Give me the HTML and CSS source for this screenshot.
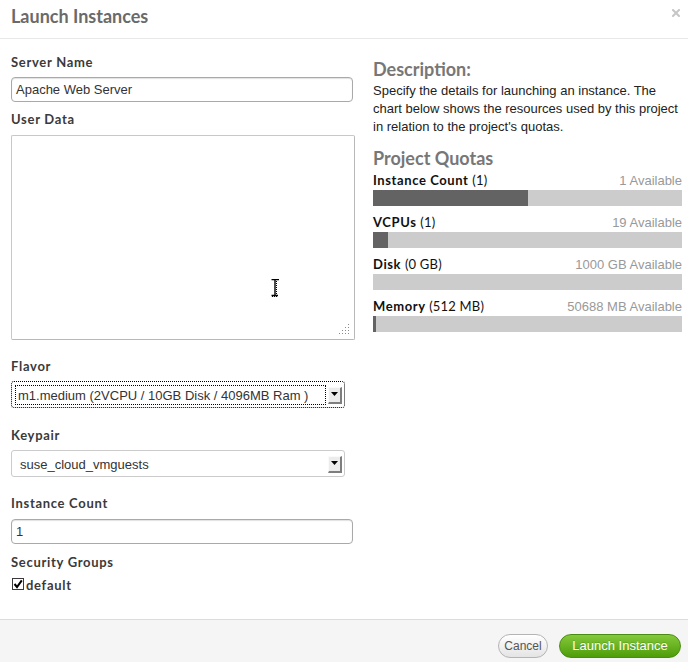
FILE: index.html
```html
<!DOCTYPE html>
<html>
<head>
<meta charset="utf-8">
<title>Launch Instances</title>
<link rel="stylesheet" href="styles.css">
</head>
<body>
<div class="modal">
  <div class="modal-header">
    <h3 class="title">Launch Instances</h3>
    <span class="close" aria-label="close">
      <svg width="8" height="8" viewBox="0 0 8 8"><path d="M1 1 L7 7 M7 1 L1 7" stroke="#c6c6c6" stroke-width="2" stroke-linecap="square"/></svg>
    </span>
  </div>

  <div class="modal-body">
    <div class="col-left">
      <label class="lbl lbl-server">Server Name</label>
      <div class="input">Apache Web Server</div>

      <label class="lbl lbl-userdata">User Data</label>
      <div class="textarea">
        <svg class="ibeam" width="9" height="18" viewBox="0 0 9 18">
          <path d="M0.5 0.5 H8 M4 0.5 V16.5 M0.5 16.5 H7" stroke="#000" stroke-width="1.4" fill="none"/>
          <path d="M5.5 2 V16" stroke="#000" stroke-width="1" stroke-dasharray="1 1" fill="none"/>
          <path d="M1 17.5 H7" stroke="#000" stroke-width="1" stroke-dasharray="1 1" fill="none"/>
        </svg>
        <svg class="grip" width="11" height="11" viewBox="0 0 11 11">
          <g fill="#8a8a8a">
            <rect x="9" y="0" width="1" height="1"/>
            <rect x="6" y="3" width="1" height="1"/><rect x="9" y="3" width="1" height="1"/>
            <rect x="3" y="6" width="1" height="1"/><rect x="6" y="6" width="1" height="1"/><rect x="9" y="6" width="1" height="1"/>
            <rect x="0" y="9" width="1" height="1"/><rect x="3" y="9" width="1" height="1"/><rect x="6" y="9" width="1" height="1"/><rect x="9" y="9" width="1" height="1"/>
          </g>
        </svg>
      </div>

      <label class="lbl lbl-flavor">Flavor</label>
      <div class="select select-focus">
        <span class="select-text focus-ring">m1.medium (2VCPU / 10GB Disk / 4096MB Ram )</span>
        <span class="select-arrow"><svg width="7" height="4" viewBox="0 0 7 4"><path d="M0 0 H7 L3.5 4 Z" fill="#000"/></svg></span>
      </div>

      <label class="lbl lbl-keypair">Keypair</label>
      <div class="select select-plain">
        <span class="select-text">suse_cloud_vmguests</span>
        <span class="select-arrow"><svg width="7" height="4" viewBox="0 0 7 4"><path d="M0 0 H7 L3.5 4 Z" fill="#000"/></svg></span>
      </div>

      <label class="lbl lbl-count">Instance Count</label>
      <div class="input">1</div>

      <label class="lbl lbl-security">Security Groups</label>
      <div class="check-row">
        <svg class="checkbox" width="12" height="12" viewBox="0 0 12 12">
          <rect x="0.5" y="0.5" width="11" height="11" fill="#fff" stroke="#3a3a3a"/>
          <path d="M2.5 6 L5 9 L9.8 2.3" stroke="#000" stroke-width="2" fill="none"/>
        </svg>
        <span class="check-label">default</span>
      </div>
    </div>

    <div class="col-right">
      <h4 class="sub">Description:</h4>
      <p class="desc">Specify the details for launching an instance. The chart below shows the resources used by this project in relation to the project's quotas.</p>

      <h4 class="sub sub-quotas">Project Quotas</h4>

      <div class="quota">
        <div class="quota-head"><span class="quota-name">Instance Count <span class="quota-val">(1)</span></span><span class="quota-avail">1 Available</span></div>
        <div class="bar"><div class="fill" style="width:50%"></div></div>
      </div>
      <div class="quota">
        <div class="quota-head"><span class="quota-name">VCPUs <span class="quota-val">(1)</span></span><span class="quota-avail">19 Available</span></div>
        <div class="bar"><div class="fill" style="width:5%"></div></div>
      </div>
      <div class="quota">
        <div class="quota-head"><span class="quota-name">Disk <span class="quota-val">(0 GB)</span></span><span class="quota-avail">1000 GB Available</span></div>
        <div class="bar"><div class="fill" style="width:0%"></div></div>
      </div>
      <div class="quota">
        <div class="quota-head"><span class="quota-name">Memory <span class="quota-val">(512 MB)</span></span><span class="quota-avail">50688 MB Available</span></div>
        <div class="bar"><div class="fill" style="width:1%"></div></div>
      </div>
    </div>
  </div>

  <div class="modal-footer">
    <button class="btn btn-cancel">Cancel</button>
    <button class="btn btn-primary">Launch Instance</button>
  </div>
</div>
</body>
</html>
```

FILE: styles.css
```css
* { box-sizing: border-box; }

html, body {
  margin: 0;
  padding: 0;
  background: #fff;
}

body {
  width: 688px;
  height: 662px;
  overflow: hidden;
  font-family: "Liberation Sans", Arial, sans-serif;
  font-size: 13px;
  color: #333;
}

.modal {
  width: 688px;
  height: 662px;
  display: flex;
  flex-direction: column;
}

/* header */
.modal-header {
  height: 39px;
  border-bottom: 1px solid #e8e8e8;
  padding-left: 11px;
  display: flex;
  justify-content: space-between;
  align-items: flex-start;
}

.title {
  margin: 0;
  padding-top: 6px;
  font-family: "Lato", sans-serif;
  font-weight: 700;
  font-size: 18px;
  line-height: 20px;
  color: #6a6a6a;
}

.close {
  display: block;
  margin-top: 9px;
  margin-right: 8px;
  width: 8px;
  height: 8px;
}
.close svg { display: block; }

/* body */
.modal-body {
  height: 580px;
  padding: 15px 6px 0 11px;
  display: flex;
  gap: 18px;
}

.col-left {
  width: 344px;
  display: flex;
  flex-direction: column;
  align-items: flex-start;
}

.col-right {
  width: 309px;
  margin-top: 5px;
}

.lbl {
  display: block;
  font-family: "Lato", sans-serif;
  font-weight: 700;
  font-size: 13px;
  line-height: 16px;
  color: #3a3a3a;
  letter-spacing: 0.7px;
  margin-bottom: 7px;
}

.lbl-userdata { margin-top: 9px; margin-bottom: 8px; }
.lbl-flavor { margin-top: 18px; }
.lbl-keypair { margin-top: 19px; }
.lbl-count { margin-top: 18px; margin-bottom: 8px; }
.lbl-security { margin-top: 10px; margin-bottom: 8px; }

.input {
  width: 342px;
  height: 25px;
  border: 1px solid #a9a9a9;
  border-radius: 4px;
  box-shadow: inset 0 1px 1px rgba(0,0,0,0.12);
  padding: 0 4px;
  line-height: 24px;
  font-size: 13px;
  color: #333;
  background: #fff;
}

.textarea {
  position: relative;
  width: 344px;
  height: 205px;
  border: 1px solid #c8c8c8;
  border-right-color: #b8b8b8;
  border-bottom-color: #b8b8b8;
  border-radius: 2px;
  background: #fff;
}

.ibeam {
  position: absolute;
  left: 259px;
  top: 143px;
}

.grip {
  position: absolute;
  right: 4px;
  bottom: 4px;
}

.select {
  width: 334px;
  height: 27px;
  border-radius: 3px;
  display: flex;
  align-items: center;
  font-size: 13px;
  color: #333;
  background: #fff;
}

.select-focus {
  border: 1px dotted #000;
  padding: 0 2px 0 3px;
}
.select-focus .select-text {
  border: 1px dotted #000;
  height: 20px;
  line-height: 19px;
  padding-left: 2px;
  margin-top: 1px;
}

.select-plain {
  border: 1px solid #cbcbcb;
  padding: 0 2px 0 8px;
}
.select-plain .select-text {
  line-height: 18px;
  padding-top: 2px;
}

.select-text {
  flex: 1;
  white-space: nowrap;
  overflow: hidden;
}

.select-arrow {
  width: 14px;
  height: 17px;
  margin-left: 2px;
  margin-top: 1px;
  background: #ececec;
  border-top: 1px solid #fafafa;
  border-left: 1px solid #fafafa;
  border-right: 2px solid #7e7e7e;
  border-bottom: 2px solid #7e7e7e;
  display: flex;
  align-items: center;
  justify-content: center;
  padding-bottom: 1px;
}
.select-arrow svg { display: block; }

.check-row {
  display: flex;
  align-items: flex-start;
  gap: 2px;
  padding-left: 1px;
  height: 16px;
}
.checkbox {
  display: block;
  margin-top: 0;
}
.check-label {
  font-family: "Lato", sans-serif;
  font-weight: 700;
  font-size: 13px;
  line-height: 14px;
  letter-spacing: 0.7px;
  color: #3a3a3a;
}

/* right column */
.sub {
  margin: 0;
  font-family: "Lato", sans-serif;
  font-weight: 700;
  font-size: 18px;
  line-height: 20px;
  color: #777;
}

.sub-quotas { margin-top: 12px; margin-bottom: 4px; }

.desc {
  margin: 3px 0 0;
  font-size: 13px;
  line-height: 18px;
  color: #222;
}

.quota { margin-bottom: 8px; }

.quota-head {
  display: flex;
  justify-content: space-between;
  align-items: baseline;
  line-height: 16px;
  height: 16px;
}

.quota-name {
  font-family: "Lato", sans-serif;
  font-weight: 700;
  font-size: 13px;
  letter-spacing: 0.6px;
  color: #111;
}
.quota-val { font-weight: 400; letter-spacing: 0.2px; }

.quota-avail {
  font-size: 13px;
  color: #999;
}

.bar {
  margin-top: 2px;
  height: 16px;
  background: #cccccc;
}
.fill {
  height: 100%;
  background: #636363;
}

/* footer */
.modal-footer {
  flex: 1;
  border-top: 1px solid #dcdcdc;
  background: #f5f5f5;
  display: flex;
  justify-content: flex-end;
  align-items: flex-start;
  padding: 14px 7px 0 0;
  gap: 11px;
}

.btn {
  margin: 0;
  height: 24px;
  border-radius: 12px;
  font-family: "Liberation Sans", Arial, sans-serif;
  line-height: 22px;
  padding: 0;
  cursor: pointer;
}

.btn-cancel {
  width: 50px;
  border: 1px solid #b4b4b4;
  background: linear-gradient(#ffffff, #e4e4e4);
  color: #555;
  font-size: 12px;
}

.btn-primary {
  width: 122px;
  border: 1px solid #4a8c12;
  background: linear-gradient(#84c93a, #4f9d0a);
  color: #fff;
  font-size: 13px;
  text-shadow: 0 -1px 0 rgba(0,0,0,0.15);
}
```
